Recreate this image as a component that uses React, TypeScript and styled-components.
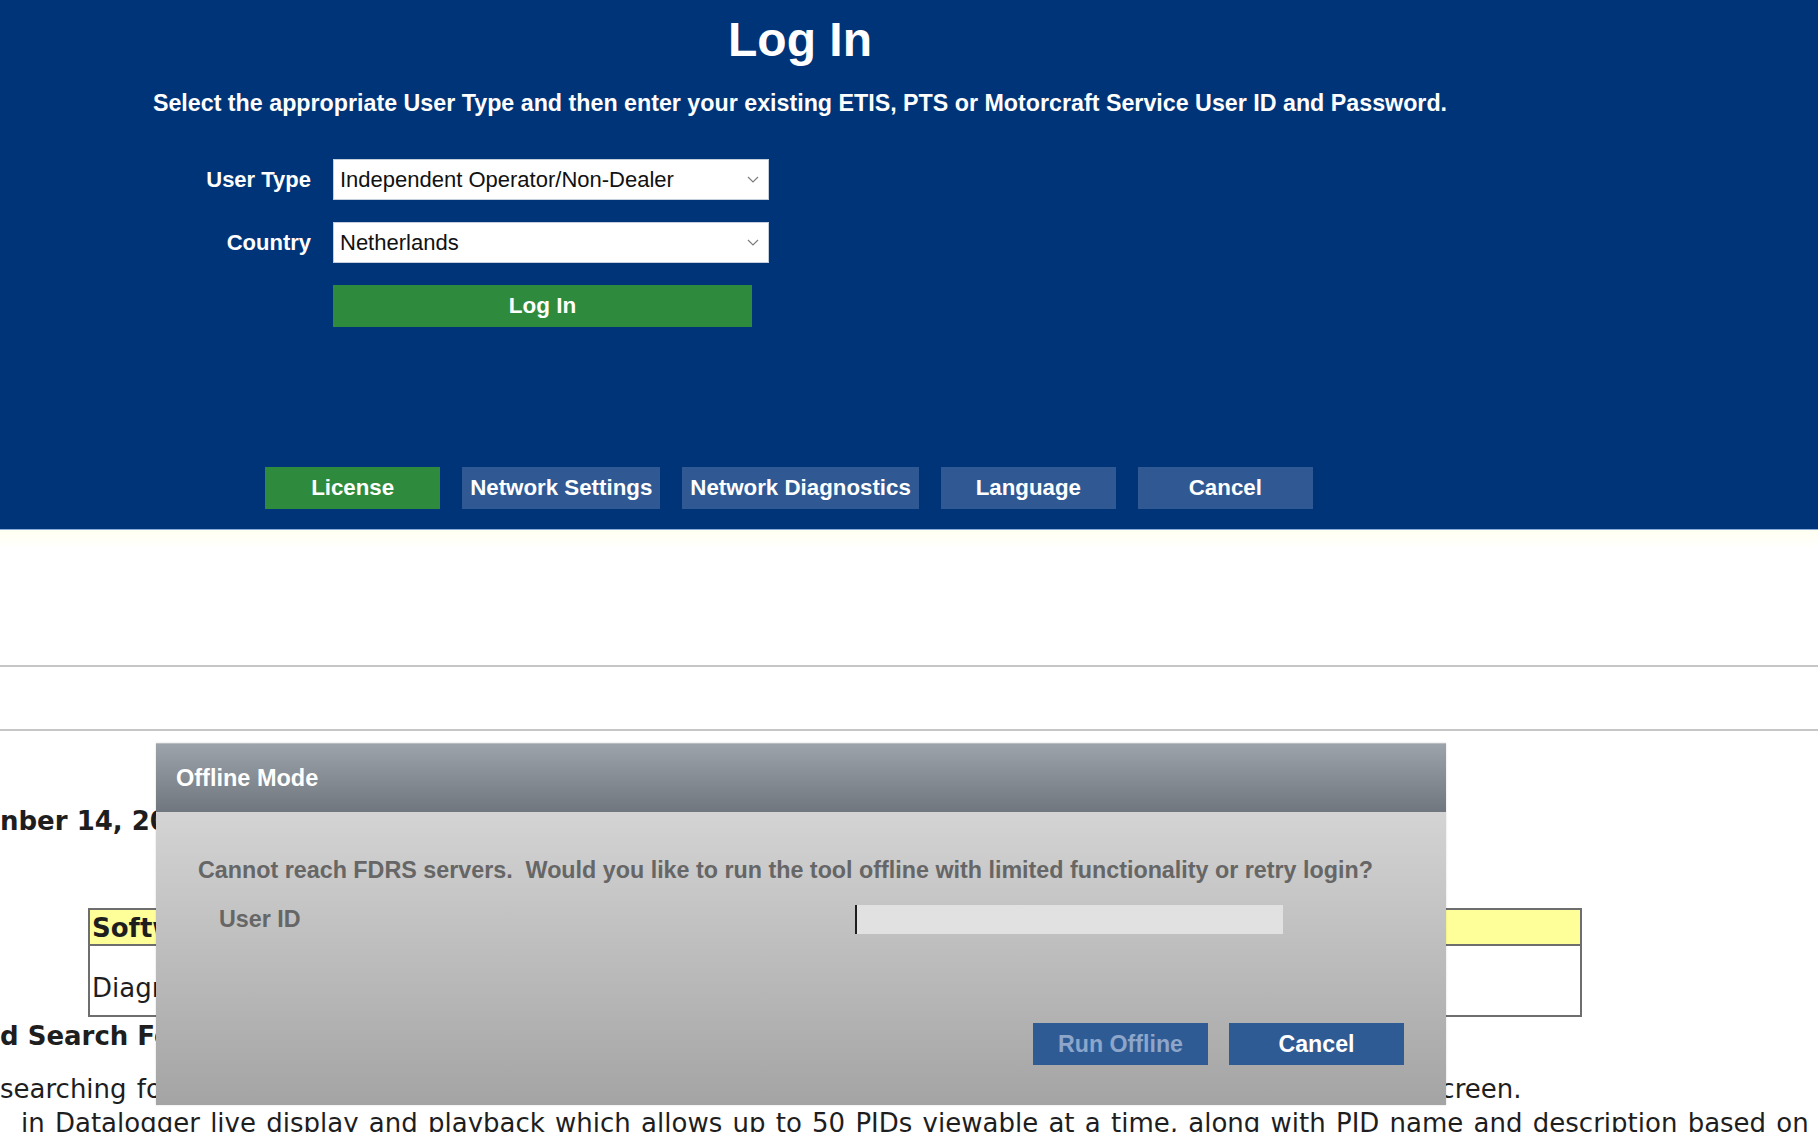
import React from 'react';
import styled, { createGlobalStyle } from 'styled-components';

// --- Global ---

const GlobalStyle = createGlobalStyle`
  html, body {
    margin: 0;
    padding: 0;
  }

  body {
    width: 1818px;
    height: 1132px;
    overflow: hidden;
    background: #fff;
    font-family: 'Liberation Sans', Arial, sans-serif;
  }
`;

const Screen = styled.div`
  position: relative;
  width: 1818px;
  height: 1132px;
  overflow: hidden;
`;

// --- Login band ---

const LoginBand = styled.header`
  height: 530px;
  box-sizing: border-box;
  padding-top: 12px;
  background: #003478;
  border-bottom: 1px solid #8aaedb;
`;

const Panel = styled.div`
  width: 1600px;
  display: flex;
  flex-direction: column;
`;

const Title = styled.h1`
  margin: 0;
  text-align: center;
  color: #fff;
  font-size: 48px;
  line-height: 55px;
  font-weight: 700;
`;

const Intro = styled.p`
  margin: 23px 0 0;
  text-align: center;
  color: #fff;
  font-size: 23.25px;
  line-height: 26px;
  font-weight: 700;
`;

const LoginForm = styled.div`
  margin: 43px 0 0 161px;
  display: grid;
  grid-template-columns: 150px 436px;
  column-gap: 22px;
  row-gap: 22px;
  align-items: center;
`;

const FieldLabel = styled.span`
  text-align: right;
  color: #fff;
  font-size: 22px;
  font-weight: 700;
`;

const SelectBox = styled.div`
  height: 41px;
  box-sizing: border-box;
  display: flex;
  align-items: center;
  justify-content: space-between;
  padding: 0 9px 0 6px;
  background: #fff;
  border: 1px solid #c3cedd;
  color: #111;
  font-size: 22px;

  svg {
    flex-shrink: 0;
  }
`;

const LoginButton = styled.button`
  grid-column: 2;
  width: 419px;
  height: 42px;
  border: none;
  padding: 0;
  background: #2e8b3e;
  color: #fff;
  font-family: inherit;
  font-size: 22.5px;
  font-weight: 700;
`;

const ActionBar = styled.div`
  margin-top: 140px;
  padding-right: 22px;
  display: flex;
  justify-content: center;
  gap: 22px;
`;

const BarButton = styled.button<{ $tone?: 'green' | 'slate' }>`
  height: 42px;
  min-width: 175px;
  padding: 0 8px;
  border: none;
  background: ${(p) => (p.$tone === 'green' ? '#2e8b3e' : '#305994')};
  color: #fff;
  font-family: inherit;
  font-size: 22.3px;
  font-weight: 700;
  white-space: nowrap;
`;

// --- Page underneath ---

const Workspace = styled.main`
  background: linear-gradient(#fffff0, #fff 18px);
  padding-top: 1px;
`;

const Rule = styled.hr<{ $gap: number }>`
  margin: ${(p) => p.$gap}px 0 0;
  border: 0;
  height: 2px;
  background: #c6c6c6;
`;

const Document = styled.section`
  font-family: 'DejaVu Sans', Verdana, sans-serif;
  color: #1e1e1e;
  font-size: 26px;
  white-space: nowrap;
`;

const DateHeading = styled.h2`
  margin: 75px 0 0;
  font-size: 26px;
  line-height: 30px;
  font-weight: 700;
`;

const NotesTable = styled.table`
  margin: 72px 0 0 88px;
  width: 1494px;
  border-collapse: separate;
  border-spacing: 0;
  border: 2px solid #6e6e6e;

  th {
    height: 36px;
    box-sizing: border-box;
    padding: 3px 2px 0;
    vertical-align: top;
    text-align: left;
    background: #ffff99;
    border-bottom: 2px solid #6e6e6e;
    font-size: 26px;
    line-height: 30px;
    font-weight: 700;
  }

  td {
    height: 69px;
    box-sizing: border-box;
    padding: 27px 2px 0;
    vertical-align: top;
    font-size: 26px;
    line-height: 30px;
  }
`;

const SectionHeading = styled.h3`
  margin: 4px 0 0;
  font-size: 26px;
  line-height: 30px;
  font-weight: 700;
`;

const Notes = styled.div`
  margin-top: 21px;
`;

const NoteLine = styled.p<{ $indent?: number }>`
  margin: 0;
  padding-left: ${(p) => p.$indent ?? 0}px;
  line-height: 34px;
  word-spacing: 2px;
`;

// --- Offline dialog ---

const Dialog = styled.div`
  position: absolute;
  left: 156px;
  top: 743px;
  width: 1290px;
  height: 362px;
  display: flex;
  flex-direction: column;
  box-shadow: 0 0 2px rgba(0, 0, 0, 0.15);
`;

const DialogHeader = styled.div`
  height: 69px;
  box-sizing: border-box;
  display: flex;
  align-items: center;
  padding-left: 20px;
  background: linear-gradient(#9da3aa, #6f767e);
  border-top: 1px solid #b9bdc2;
  color: #fff;
  font-size: 23.5px;
  font-weight: 700;
`;

const DialogBody = styled.div`
  flex: 1;
  display: flex;
  flex-direction: column;
  padding: 0 42px 40px;
  background: linear-gradient(#d4d4d4, #a4a4a4);
  color: #666;
  font-size: 23.3px;
  font-weight: 700;
`;

const Message = styled.p`
  margin: 46px 0 0;
  line-height: 25px;
  white-space: pre;
`;

const UserRow = styled.div`
  margin-top: 22px;
  padding-left: 21px;
  display: grid;
  grid-template-columns: 636px 428px;
  align-items: center;
`;

const TextField = styled.div`
  height: 29px;
  display: flex;
  background: #e1e1e1;
`;

const Caret = styled.span`
  width: 2px;
  background: #1e1e1e;
`;

const DialogActions = styled.div`
  margin-top: auto;
  display: flex;
  justify-content: flex-end;
  gap: 21px;
`;

const DialogButton = styled.button<{ $muted?: boolean }>`
  width: 175px;
  height: 42px;
  padding: 0;
  border: none;
  background: #2f5b95;
  color: ${(p) => (p.$muted ? '#8da6c9' : '#fff')};
  font-family: inherit;
  font-size: 23.2px;
  font-weight: 700;
`;

const Chevron = () => (
  <svg width="12" height="7" viewBox="0 0 12 7">
    <polyline points="1,1 6,6 11,1" fill="none" stroke="#7d7d7d" strokeWidth="1.2" />
  </svg>
);

export default function App() {
  return (
    <Screen>
      <GlobalStyle />

      <LoginBand>
        <Panel>
          <Title>Log In</Title>
          <Intro>
            Select the appropriate User Type and then enter your existing ETIS, PTS or Motorcraft Service User ID and Password.
          </Intro>
          <LoginForm>
            <FieldLabel>User Type</FieldLabel>
            <SelectBox>
              <span>Independent Operator/Non-Dealer</span>
              <Chevron />
            </SelectBox>
            <FieldLabel>Country</FieldLabel>
            <SelectBox>
              <span>Netherlands</span>
              <Chevron />
            </SelectBox>
            <LoginButton>Log In</LoginButton>
          </LoginForm>
          <ActionBar>
            <BarButton $tone="green">License</BarButton>
            <BarButton>Network Settings</BarButton>
            <BarButton>Network Diagnostics</BarButton>
            <BarButton>Language</BarButton>
            <BarButton>Cancel</BarButton>
          </ActionBar>
        </Panel>
      </LoginBand>

      <Workspace>
        <Rule $gap={134} />
        <Rule $gap={62} />

        <Document>
          <DateHeading>nber 14, 2023</DateHeading>
          <NotesTable>
            <thead>
              <tr>
                <th>Software</th>
              </tr>
            </thead>
            <tbody>
              <tr>
                <td>Diagnostic</td>
              </tr>
            </tbody>
          </NotesTable>
          <SectionHeading>d Search Feature</SectionHeading>
          <Notes>
            <NoteLine>
              searching for a PID by name or description from the PID lists in the Datalogger live data and PID selection screen.
            </NoteLine>
            <NoteLine $indent={21}>
              in Datalogger live display and playback which allows up to 50 PIDs viewable at a time, along with PID name and description based on
            </NoteLine>
          </Notes>
        </Document>
      </Workspace>

      <Dialog>
        <DialogHeader>Offline Mode</DialogHeader>
        <DialogBody>
          <Message>Cannot reach FDRS servers.  Would you like to run the tool offline with limited functionality or retry login?</Message>
          <UserRow>
            <span>User ID</span>
            <TextField>
              <Caret />
            </TextField>
          </UserRow>
          <DialogActions>
            <DialogButton $muted>Run Offline</DialogButton>
            <DialogButton>Cancel</DialogButton>
          </DialogActions>
        </DialogBody>
      </Dialog>
    </Screen>
  );
}
